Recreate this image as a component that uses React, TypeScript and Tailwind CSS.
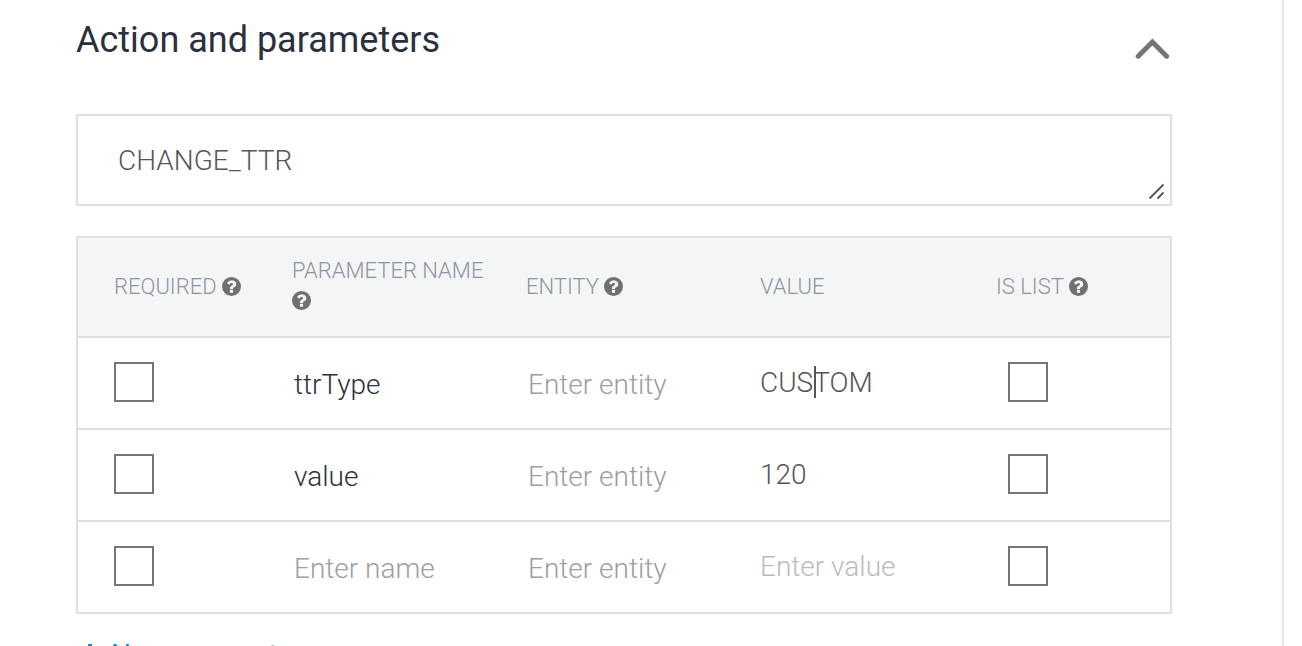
import React from "react";

const columns = [
  { label: "REQUIRED", help: true },
  { label: "PARAMETER NAME", help: true },
  { label: "ENTITY", help: true },
  { label: "VALUE", help: false },
  { label: "IS LIST", help: true },
];

const rows = [
  { name: "ttrType", value: "CUSTOM", caret: 3 },
  { name: "value", value: "120" },
  { name: "", value: "" },
];

const grid = "grid grid-cols-[178px_234px_234px_236px_1fr] pl-9";

function HelpIcon() {
  return (
    <svg viewBox="128 128 1536 1536" className="h-[19px] w-[19px] shrink-0 fill-[#707070]">
      <path
        fillRule="evenodd"
        d="M1664 896a768 768 0 1 1-1536 0a768 768 0 1 1 1536 0zM1024 1376v-192q0-14-9-23t-23-9h-192q-14 0-23 9t-9 23v192q0 14 9 23t23 9h192q14 0 23-9t9-23zm256-672q0-88-55.500-163t-138.500-116-170-41q-243 0-371 213-15 24 8 42l132 100q7 6 19 6 16 0 25-12 53-68 86-92 34-24 86-24 48 0 85.500 26t37.500 59q0 38-20 61t-68 45q-63 28-115.500 86.500t-52.500 125.500v36q0 14 9 23t23 9h192q14 0 23-9t9-23q0-19 21.500-49.500t54.500-49.500q32-18 49-28.500t46-35 44.500-48 28-60.500 12.500-81z"
      />
    </svg>
  );
}

function Checkbox({ className = "" }: { className?: string }) {
  return (
    <div
      role="checkbox"
      aria-checked="false"
      className={`h-10 w-10 border-2 border-[#757575] bg-white ${className}`}
    />
  );
}

function Value({ text, caret }: { text: string; caret?: number }) {
  if (!text) return <span className="text-[#b9bbc3]">Enter value</span>;
  if (caret === undefined) return <span className="text-[#555]">{text}</span>;
  return (
    <span className="flex items-center text-[#555]">
      <span>{text.slice(0, caret)}</span>
      <span className="mr-[-3px] mb-0.5 ml-px h-8 w-0.5 bg-[#555]" />
      <span>{text.slice(caret)}</span>
    </span>
  );
}

export default function App() {
  return (
    <div className="h-[646px] w-[1302px] overflow-hidden bg-white font-[Roboto,sans-serif] text-[28px] font-light">
      <div className="h-full w-[1284px] border-r-2 border-[#e6e6e6] pr-[110px] pl-[76px]">
        <header className="flex h-[114px] items-start justify-between">
          <h2 className="text-[36px] leading-[80px] font-normal text-[#2b3040]">Action and parameters</h2>
          <svg viewBox="0 0 36 22" className="mt-[37px] mr-px h-[22px] w-9" fill="none" stroke="#757575" strokeWidth="5">
            <path d="M3.2 19.2 17.4 5 31.6 19.2" strokeLinecap="round" />
          </svg>
        </header>

        <div className="flex h-[92px] items-center justify-between border-2 border-[#e0e0e0] pr-1 pl-10">
          <span className="pt-0.5 text-[#555]">CHANGE_TTR</span>
          <svg viewBox="0 0 18 18" className="mb-1 h-[18px] w-[18px] self-end" stroke="#555" strokeWidth="1.8">
            <path d="M1.5 16.5 15.500 2.500M9.500 16.500 15.500 10.500" />
          </svg>
        </div>

        <div className="mt-[30px] border-2 border-[#dfe1e1]">
          <div className={`${grid} h-[100px] border-b-2 border-[#dfe1e1] bg-[#f4f6f5] text-[22px] text-[#8f94a3]`}>
            {columns.map(({ label, help }) =>
              label === "PARAMETER NAME" ? (
                <div key={label} className="flex flex-col pt-[17px]">
                  <span className="leading-8">{label}</span>
                  <span className="mt-1">
                    <HelpIcon />
                  </span>
                </div>
              ) : (
                <div key={label} className="flex items-center gap-[5px] pb-0.5">
                  <span>{label}</span>
                  {help && <HelpIcon />}
                </div>
              ),
            )}
          </div>
          {rows.map((row, i) => (
            <div key={i} className={`${grid} h-[92px] items-center border-b-2 border-[#dfe1e1] last:h-[90px] last:border-b-0`}>
              <Checkbox className="-mt-0.5" />
              <span className={`pt-1 pl-0.5 ${row.name ? "text-[#2b3040]" : "text-[#9e9e9e]"}`}>
                {row.name || "Enter name"}
              </span>
              <span className="pt-1 pl-0.5 text-[#9e9e9e]">Enter entity</span>
              <Value text={row.value} caret={row.caret} />
              <Checkbox className="-mt-0.5 ml-3" />
            </div>
          ))}
        </div>

        <button className="mt-[21px] flex items-center gap-[11px] pl-1 leading-10 font-normal text-[#1a87d3]">
          <svg viewBox="0 0 20 20" className="-mt-[3px] h-5 w-5" fill="none" stroke="currentColor" strokeWidth="4">
            <path d="M10 0v20M0 10h20" />
          </svg>
          New parameter
        </button>
      </div>
    </div>
  );
}
